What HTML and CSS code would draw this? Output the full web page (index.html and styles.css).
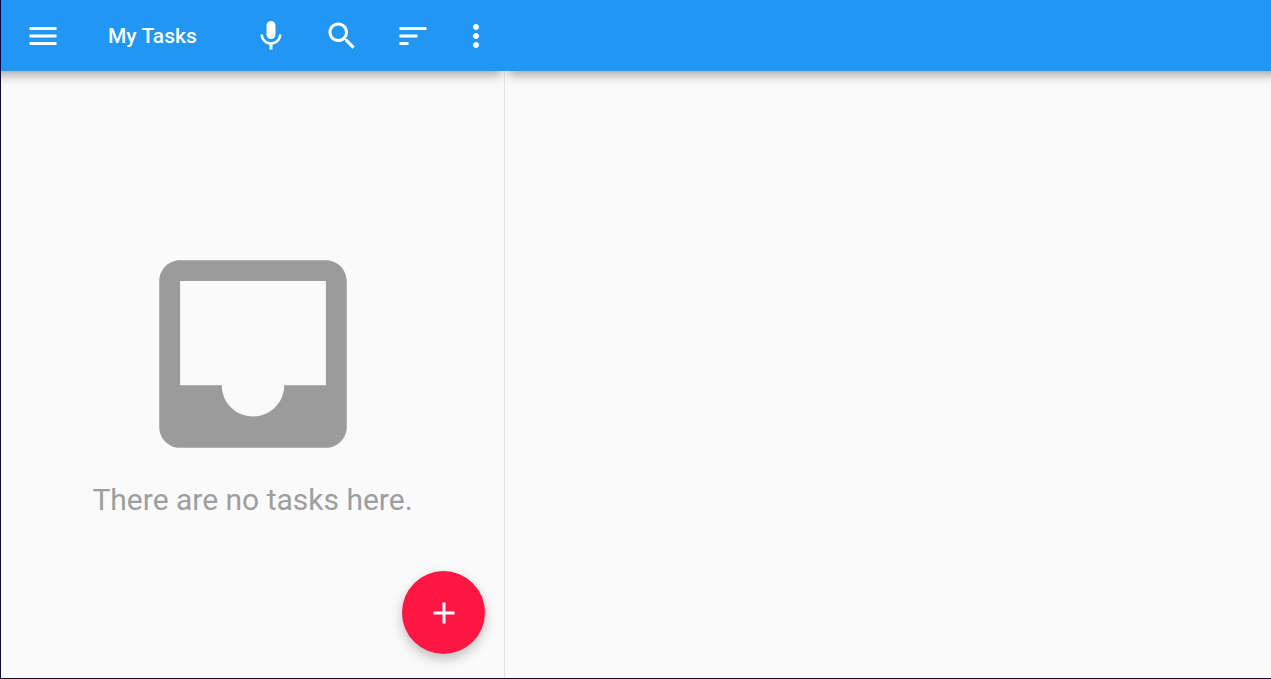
FILE: index.html
```html
<!DOCTYPE html>
<html lang="en">
<head>
<meta charset="utf-8">
<meta name="viewport" content="width=device-width, initial-scale=1">
<title>My Tasks</title>
<link rel="stylesheet" href="styles.css">
</head>
<body>
<div class="app">
  <main class="pane list-pane">
    <header class="toolbar">
      <button class="menu-button" type="button" aria-label="Open menu">
        <svg class="icon" viewBox="0 0 24 24"><path d="M3 18h18v-2H3v2zm0-5h18v-2H3v2zm0-7v2h18V6H3z"/></svg>
      </button>
      <h1 class="title">My Tasks</h1>
      <button class="action" type="button" aria-label="Voice input">
        <svg class="icon" viewBox="0 0 24 24"><path d="M12 14c1.660 0 2.990-1.340 2.990-3L15 5c0-1.660-1.340-3-3-3S9 3.340 9 5v6c0 1.660 1.340 3 3 3zm5.300-3c0 3-2.540 5.100-5.300 5.100S6.700 14 6.700 11H5c0 3.410 2.720 6.230 6 6.720V21h2v-3.280c3.280-.480 6-3.300 6-6.720h-1.700z"/></svg>
      </button>
      <button class="action" type="button" aria-label="Search">
        <svg class="icon" viewBox="0 0 24 24"><path d="M15.500 14h-.790l-.280-.270C15.410 12.590 16 11.110 16 9.500 16 5.910 13.090 3 9.500 3S3 5.910 3 9.500 5.910 16 9.500 16c1.610 0 3.090-.590 4.230-1.570l.270.280v.790l5 4.990L20.490 19l-4.990-5zm-6 0C7.010 14 5 11.990 5 9.500S7.010 5 9.500 5 14 7.010 14 9.500 11.990 14 9.500 14z"/></svg>
      </button>
      <button class="action" type="button" aria-label="Sort">
        <svg class="icon" viewBox="0 0 24 24"><path d="M3 18h6v-2H3v2zM3 6v2h18V6H3zm0 7h12v-2H3v2z"/></svg>
      </button>
      <button class="action overflow" type="button" aria-label="More options">
        <svg class="icon" viewBox="0 0 24 24"><path d="M12 8c1.100 0 2-.9 2-2s-.9-2-2-2-2 .9-2 2 .9 2 2 2zm0 2c-1.100 0-2 .9-2 2s.9 2 2 2 2-.9 2-2-.9-2-2-2zm0 6c-1.100 0-2 .9-2 2s.9 2 2 2 2-.9 2-2-.9-2-2-2z"/></svg>
      </button>
    </header>
    <section class="empty">
      <svg class="empty-icon" viewBox="0 0 24 24" aria-hidden="true"><path d="M19 3H5c-1.100 0-2 .9-2 2v14c0 1.100.9 2 2 2h14c1.100 0 2-.9 2-2V5c0-1.100-.9-2-2-2zm0 12h-4c0 1.660-1.340 3-3 3s-3-1.340-3-3H5V5h14v10z"/></svg>
      <p class="empty-text">There are no tasks here.</p>
    </section>
    <button class="fab" type="button" aria-label="New task">
      <svg class="icon" viewBox="0 0 24 24"><path d="M19 13h-6v6h-2v-6H5v-2h6V5h2v6h6v2z"/></svg>
    </button>
  </main>
  <section class="pane detail-pane" aria-label="Task details">
    <div class="toolbar"></div>
  </section>
</div>
</body>
</html>
```

FILE: styles.css
```css
* {
  box-sizing: border-box;
}

body {
  margin: 0;
  font-family: Roboto, "Liberation Sans", sans-serif;
}

button {
  display: flex;
  align-items: center;
  justify-content: center;
  margin: 0;
  padding: 0;
  border: 0;
  background: none;
  color: inherit;
  cursor: pointer;
}

.app {
  display: flex;
  min-height: 100vh;
  overflow: clip;
  border-left: 1px solid #0b0b35;
  border-bottom: 1px solid #0b0b35;
  background: #fafafa;
}

.pane {
  display: flex;
  flex-direction: column;
}

.list-pane {
  position: relative;
  flex: 0 0 504px;
  border-right: 1px solid #e2e2e2;
}

.detail-pane {
  flex: 1;
}

.toolbar {
  display: flex;
  align-items: stretch;
  height: 71px;
  background: #2196f3;
  color: #fff;
  box-shadow: 0 7px 10px -3px rgba(0, 0, 0, 0.34);
  /* keeps each pane's shadow off the neighbouring toolbar */
  clip-path: inset(0 0 -24px 0);
}

/* The outer ends run past the window so the shadow only fades at the divider. */
.list-pane .toolbar {
  margin: 0 -1px 0 -12px;
  padding: 0 1px 0 12px;
}

.detail-pane .toolbar {
  margin-right: -12px;
}

.menu-button {
  width: 83px;
}

.title {
  flex: 1;
  margin: 0;
  padding-left: 24px;
  font-size: 21px;
  font-weight: 500;
  line-height: 72px;
}

.action {
  width: 71px;
}

.overflow {
  width: 56px;
}

.icon {
  width: 36px;
  height: 36px;
  fill: currentColor;
}

.empty {
  display: flex;
  flex: 1;
  flex-direction: column;
  align-items: center;
  justify-content: center;
}

.empty-icon {
  width: 250px;
  height: 250px;
  fill: #9b9b9b;
}

.empty-text {
  margin: 0;
  color: #9e9e9e;
  font-size: 30px;
  line-height: 42px;
}

.fab {
  position: absolute;
  right: 19px;
  bottom: 24px;
  width: 83px;
  height: 83px;
  border-radius: 50%;
  background: #ff1744;
  color: #fff;
  box-shadow: 0 5px 12px rgba(0, 0, 0, 0.24);
}
```
